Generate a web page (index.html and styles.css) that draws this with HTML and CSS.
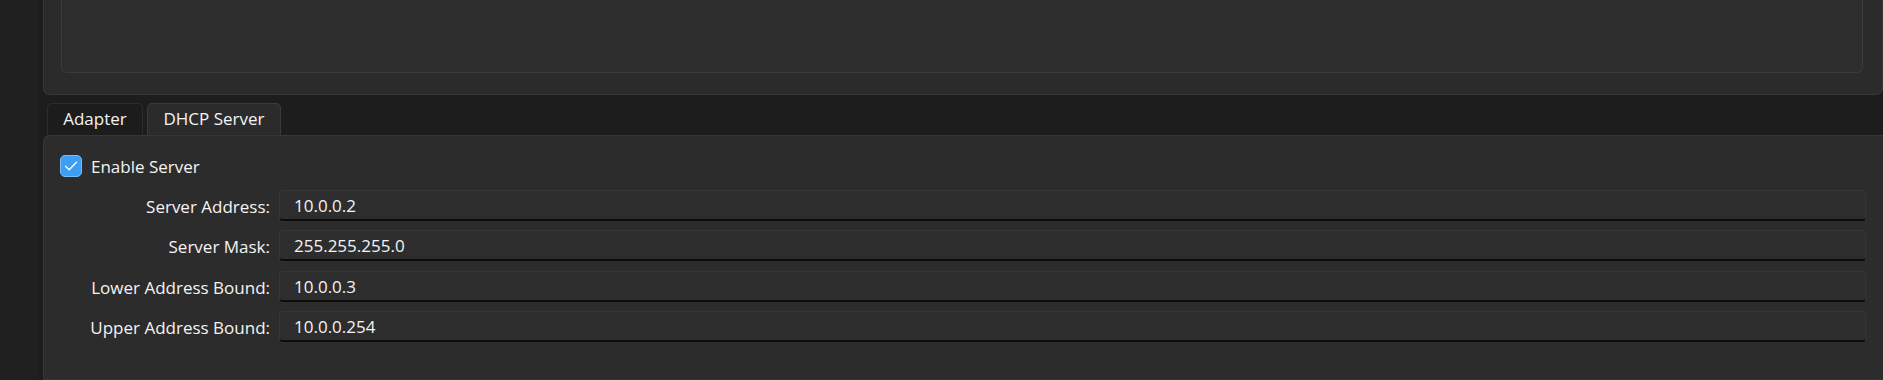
FILE: index.html
```html
<!DOCTYPE html>
<html>
<head>
<meta charset="utf-8">
<link rel="stylesheet" href="styles.css">
</head>
<body>
<div class="app">
  <aside class="sidebar"></aside>
  <main class="main">
    <section class="top-panel">
      <div class="inner-box"></div>
    </section>
    <nav class="tabs">
      <div class="tab">Adapter</div>
      <div class="tab tab-active">DHCP Server</div>
    </nav>
    <section class="bottom-panel">
      <label class="check-row">
        <span class="checkbox">
          <svg width="16" height="16" viewBox="0 0 16 16"><path d="M2.5 8.3 L6.2 11.8 L13.5 4.2" fill="none" stroke="#ffffff" stroke-width="1.3" stroke-linecap="round" stroke-linejoin="round"/></svg>
        </span>
        <span class="check-label">Enable Server</span>
      </label>
      <div class="form">
        <div class="label">Server Address:</div>
        <div class="field">10.0.0.2</div>
        <div class="label">Server Mask:</div>
        <div class="field">255.255.255.0</div>
        <div class="label">Lower Address Bound:</div>
        <div class="field">10.0.0.3</div>
        <div class="label">Upper Address Bound:</div>
        <div class="field">10.0.0.254</div>
      </div>
    </section>
  </main>
</div>
</body>
</html>
```
FILE: styles.css
```css
* { box-sizing: border-box; }
html, body {
  margin: 0;
  padding: 0;
  background: #202020;
  width: 1883px;
  height: 380px;
  overflow: hidden;
  font-family: "Segoe UI", "Open Sans", "Noto Sans", sans-serif;
  font-size: 17px;
  color: #f4f4f4;
}
.app {
  display: flex;
  height: 380px;
}
.sidebar {
  width: 38px;
  flex: none;
  background: #202020;
}
.main {
  flex: 1;
  background: #1d1d1d;
  padding-left: 5px;
  display: flex;
  flex-direction: column;
}
.top-panel {
  height: 95px;
  flex: none;
  background: #2b2b2b;
  border: 1px solid #363636;
  border-top: none;
  border-radius: 0 0 7px 7px;
  padding: 0 19px 21px 17px;
  display: flex;
}
.inner-box {
  flex: 1;
  background: #2d2d2d;
  border: 1px solid #3a3a3a;
  border-top: none;
  border-radius: 0 0 6px 6px;
}
.tabs {
  height: 40px;
  flex: none;
  display: flex;
  align-items: flex-end;
  gap: 4px;
  padding-left: 4px;
}
.tab {
  height: 32px;
  padding: 0 14px 2px;
  display: flex;
  align-items: center;
  background: #1c1c1c;
  border: 1px solid #2c2c2c;
  border-bottom: none;
  border-radius: 5px 5px 0 0;
  width: 96px;
  justify-content: center;
}
.tab-active {
  background: #2b2b2b;
  border-color: #3a3a3a;
  width: 134px;
}
.bottom-panel {
  flex: 1;
  background: #2c2c2c;
  border: 1px solid #363636;
  border-right: none;
  border-radius: 7px 0 0 0;
  padding: 18px 17px 0 16px;
}
.check-row {
  display: flex;
  align-items: center;
  gap: 9px;
  height: 23px;
}
.check-label {
  padding-top: 1px;
}
.checkbox {
  width: 22px;
  height: 22px;
  border-radius: 5px;
  background: #3d9ff3;
  border: 1px solid #7cbcf2;
  display: flex;
  align-items: center;
  justify-content: center;
}
.form {
  margin-top: 13px;
  display: grid;
  grid-template-columns: 210px 1fr;
  column-gap: 9px;
  row-gap: 9.3px;
}
.label {
  height: 31px;
  padding-top: 2px;
  display: flex;
  align-items: center;
  justify-content: flex-end;
}
.field {
  height: 31px;
  display: flex;
  align-items: center;
  padding-left: 14px;
  padding-top: 1px;
  background: #2d2d2d;
  border: 1px solid #363636;
  border-bottom: 2px solid #0c0c0c;
  border-radius: 4px;
}
```
